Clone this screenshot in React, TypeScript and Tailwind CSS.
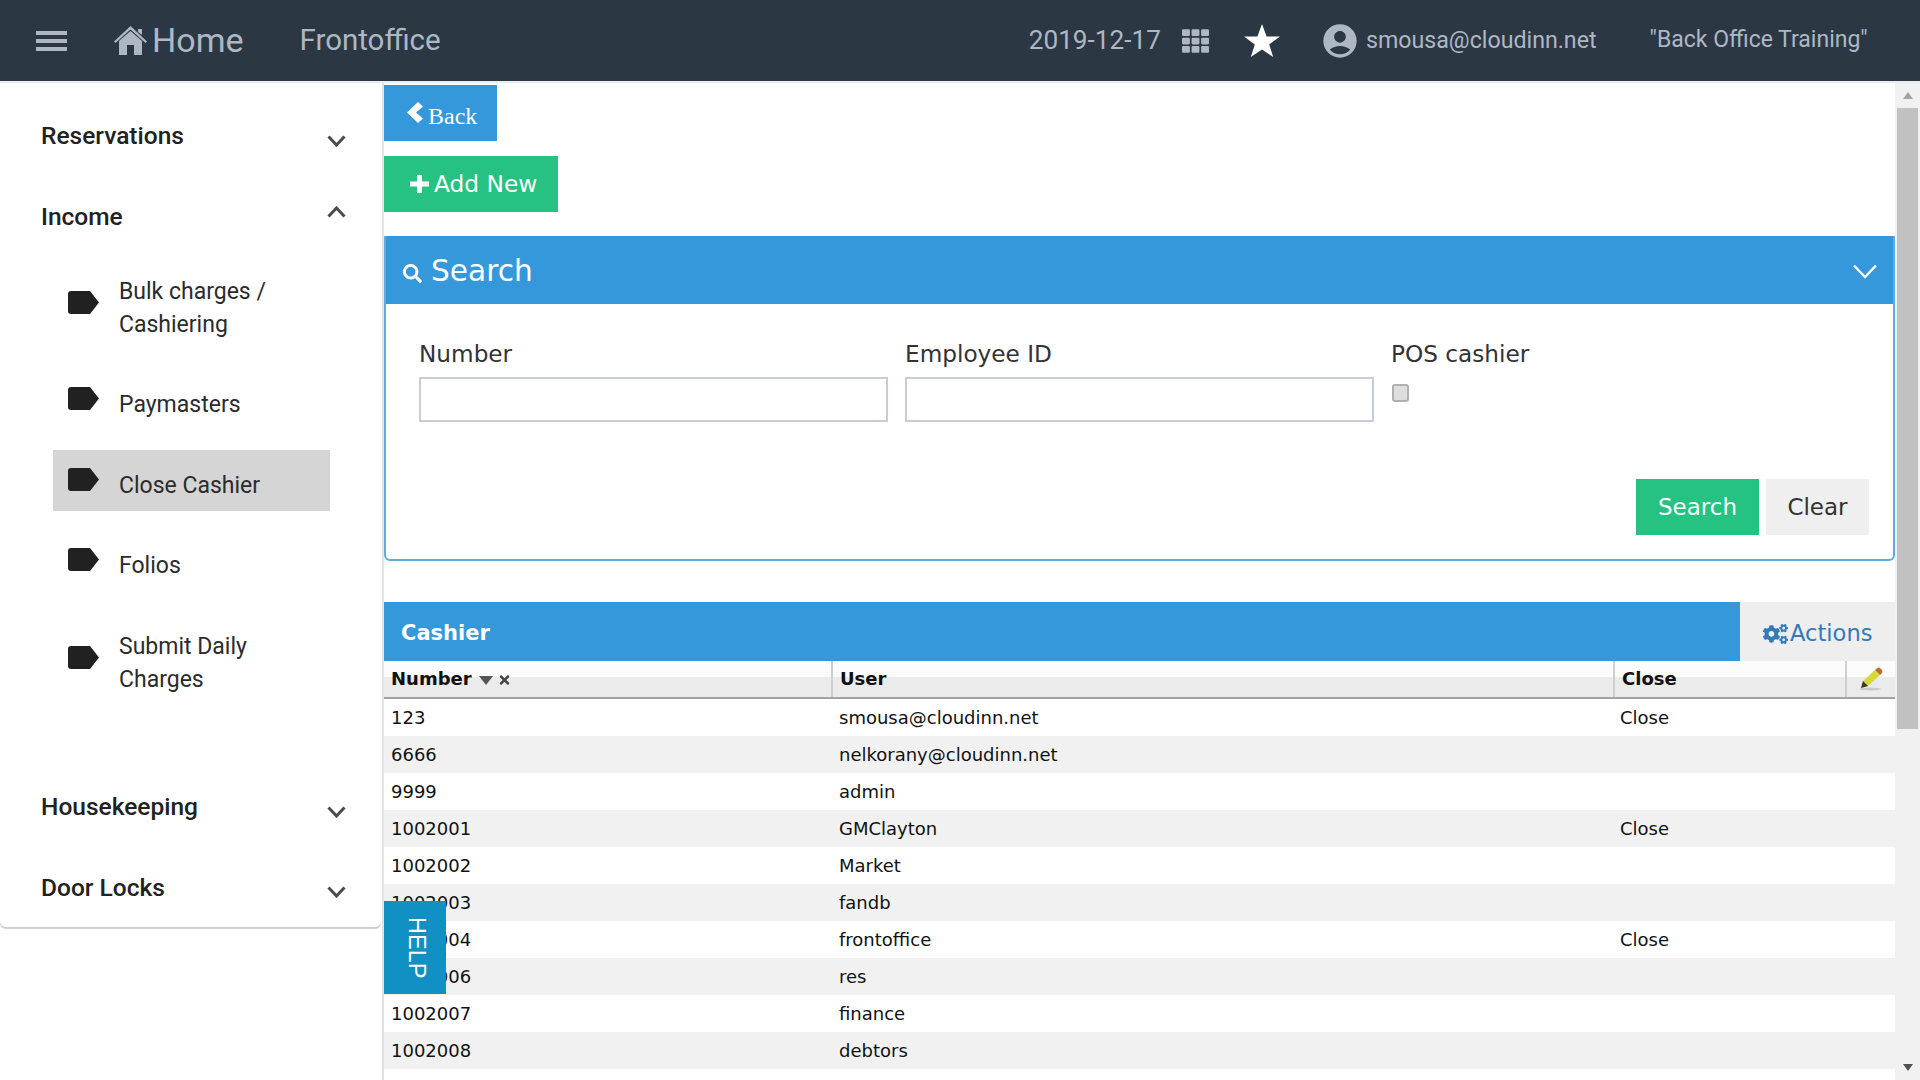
import React from 'react';
import { FaCogs, FaSearch, FaTh, FaTimes } from 'react-icons/fa';
import { MdAccountCircle } from 'react-icons/md';

const rows = [
  { number: '123', user: 'smousa@cloudinn.net', close: true },
  { number: '6666', user: 'nelkorany@cloudinn.net', close: false },
  { number: '9999', user: 'admin', close: false },
  { number: '1002001', user: 'GMClayton', close: true },
  { number: '1002002', user: 'Market', close: false },
  { number: '1002003', user: 'fandb', close: false },
  { number: '1002004', user: 'frontoffice', close: true },
  { number: '1002006', user: 'res', close: false },
  { number: '1002007', user: 'finance', close: false },
  { number: '1002008', user: 'debtors', close: false },
];

const Chevron = ({ up = false }: { up?: boolean }) => (
  <svg width="19" height="12" viewBox="0 0 19 12" className={up ? '-mt-[10px]' : 'mt-[10px]'}>
    <polyline
      points={up ? '1.5,10.5 9.5,2 17.5,10.5' : '1.5,1.5 9.5,10 17.5,1.5'}
      fill="none"
      stroke="#4a4a4a"
      strokeWidth="3"
    />
  </svg>
);

const SectionTitle = ({ title, open = false, last = false }: { title: string; open?: boolean; last?: boolean }) => (
  <div className={`flex items-center justify-between pl-[41px] pr-[35px] ${last ? 'h-[80px]' : 'h-[81px]'}`}>
    <span className="mt-[2px] text-[24.5px] font-medium text-[#212121]">{title}</span>
    <Chevron up={open} />
  </div>
);

const SubItem = ({ lines, active = false, extraTop = false }: { lines: string[]; active?: boolean; extraTop?: boolean }) => (
  <div
    className={`flex items-center gap-[20px] pl-[15px] ${active ? 'bg-[#d5d5d5] pb-[9px] pt-[19px]' : 'pb-[10px] pt-[18px]'} ${extraTop ? 'mt-[1px]' : ''}`}
  >
    <svg width="31" height="23" viewBox="0 0 31 23" className="-mt-[12px] shrink-0">
      <path d="M3 0H22L31 11.5L22 23H3Q0 23 0 20V3Q0 0 3 0Z" fill="#212121" />
    </svg>
    <div className="text-[23px] leading-[33px] text-[#2b2b2b]">
      {lines.map((line) => (
        <div key={line}>{line}</div>
      ))}
    </div>
  </div>
);

const Sidebar = () => (
  <aside className="h-full w-[384px] shrink-0 border-r-2 border-[#e2e2e2] font-['Roboto',sans-serif]">
    <div className="w-[381px] rounded-b-[6px] pt-[12px] shadow-[0_2px_1px_#cfcfcf]">
      <SectionTitle title="Reservations" />
      <SectionTitle title="Income" open />
      <div className="ml-[53px] flex w-[277px] flex-col gap-[19px] pb-[60px]">
        <SubItem lines={['Bulk charges /', 'Cashiering']} />
        <SubItem lines={['Paymasters']} />
        <SubItem lines={['Close Cashier']} active />
        <SubItem lines={['Folios']} extraTop />
        <SubItem lines={['Submit Daily', 'Charges']} extraTop />
      </div>
      <SectionTitle title="Housekeeping" />
      <SectionTitle title="Door Locks" last />
    </div>
  </aside>
);

const Header = () => (
  <header className="flex h-[83px] shrink-0 items-center border-b-2 border-[#ececec] bg-[#2c3744] pl-[36px] font-['Roboto',sans-serif] text-[#aeb7c4]">
    <div className="flex h-[20px] w-[31px] flex-col justify-between">
      <div className="h-[4px] bg-[#aeb7c4]" />
      <div className="h-[4px] bg-[#aeb7c4]" />
      <div className="h-[4px] bg-[#aeb7c4]" />
    </div>
    <svg width="33" height="29" viewBox="0 0 33 29" className="ml-[47px]" fill="#aeb7c4">
      <path d="M16.5 0L33 15.5L31.5 17L16.5 3.5L1.5 17L0 15.5Z" />
      <path d="M16.5 5L28 15V29H20V19H13V29H5V15Z" />
      <path d="M24 3H28V9L24 6Z" />
    </svg>
    <span className="ml-[5px] text-[34px]">Home</span>
    <span className="ml-[56px] text-[29.5px]">Frontoffice</span>
    <span className="ml-[588px] text-[26.2px]">2019-12-17</span>
    <FaTh className="ml-[21px] h-[30px] w-[27px]" />
    <svg width="36" height="33" viewBox="0 0 36 33" className="ml-[35px]">
      <polygon points="18,0 22.6,12.4 36,12.4 25.2,20.4 29.2,33 18,25.4 6.8,33 10.8,20.4 0,12.4 13.4,12.4" fill="#ffffff" />
    </svg>
    <MdAccountCircle className="ml-[40px] h-[40px] w-[40px]" />
    <span className="ml-[6px] text-[23.2px]">smousa@cloudinn.net</span>
    <span className="ml-[53px] text-[23px]">"Back Office Training"</span>
  </header>
);

const SearchPanel = () => (
  <section className="mt-[24px] h-[325px] rounded-b-[6px] border-x-2 border-b-2 border-[#5dade2]">
    <div className="flex h-[68px] items-center bg-[#3498db] px-[16px] text-white">
      <FaSearch className="ml-[1px] mt-[6px] h-[19px] w-[19px]" />
      <span className="ml-[9px] mt-[2px] text-[29.6px]">Search</span>
      <svg width="24" height="15" viewBox="0 0 24 15" className="ml-auto mt-[2px]">
        <polyline points="1,1.5 12,13 23,1.5" fill="none" stroke="#ffffff" strokeWidth="2.5" />
      </svg>
    </div>
    <div className="grid grid-cols-[486px_486px_486px] pl-[33px] pt-[33px] text-[23.2px] text-[#333333]">
      <div>
        <div className="leading-[34px]">Number</div>
        <input className="mt-[6px] h-[45px] w-[469px] border-2 border-[#c8ccd9] bg-white" />
      </div>
      <div>
        <div className="leading-[34px]">Employee ID</div>
        <input className="mt-[6px] h-[45px] w-[469px] border-2 border-[#c8ccd9] bg-white" />
      </div>
      <div>
        <div className="leading-[34px]">POS cashier</div>
        <div className="ml-[1px] mt-[13px] h-[18px] w-[17px] rounded-[3px] border-2 border-[#b0b0b0] bg-[#dedede]" />
      </div>
    </div>
    <div className="mt-[57px] flex justify-end gap-[7px] pr-[24px] text-[23px]">
      <button className="h-[56px] w-[123px] bg-[#26c281] text-white">Search</button>
      <button className="h-[56px] w-[103px] bg-[#efefef] text-[#333333]">Clear</button>
    </div>
  </section>
);

const HeaderCell = ({ className, children }: { className: string; children: React.ReactNode }) => (
  <div className={`flex items-center border-r-2 border-[#cfcfcf] pb-[2px] pl-[7px] font-bold ${className}`}>{children}</div>
);

const CashierTable = () => (
  <section className="mt-[41px] text-[18px] text-[#111111]">
    <div className="flex h-[59px]">
      <div className="flex flex-1 items-center bg-[#3498db] pl-[17px] pt-[4px] text-[21px] font-bold text-white">Cashier</div>
      <div className="flex w-[155px] items-center gap-[2px] bg-[#eeeeee] pl-[23px] pt-[4px] text-[22.6px] text-[#337ab7]">
        <FaCogs className="h-[24px] w-[25px]" />
        Actions
      </div>
    </div>
    <div className="flex h-[38px] border-b-2 border-[#a3a3a3] bg-[linear-gradient(#fcfcfc_0,#fcfcfc_45%,#ebebeb_45%,#ebebeb_100%)]">
      <HeaderCell className="w-[449px]">
        Number
        <svg width="14" height="9" viewBox="0 0 14 9" className="ml-[7px] mt-[4px]">
          <path d="M0 0H14L7 9Z" fill="#555555" />
        </svg>
        <FaTimes className="ml-[5px] mt-[4px] h-[14px] w-[13px] text-[#444444]" />
      </HeaderCell>
      <HeaderCell className="w-[782px]">User</HeaderCell>
      <HeaderCell className="w-[232px]">Close</HeaderCell>
      <div className="flex flex-1 items-center justify-center">
        <svg width="24" height="24" viewBox="0 0 24 24">
          <ellipse cx="11" cy="22" rx="11" ry="1.5" fill="#c9c9c9" />
          <path d="M2 21L4 14L16 3L21 8L9 19Z" fill="#d8d83a" />
          <path d="M16 3L18.5 1Q20 0 21.5 1.5L23 3Q24 4.5 23 6L21 8Z" fill="#b96f2c" />
          <path d="M2 21L4 14L9 19Z" fill="#3a3a2a" />
        </svg>
      </div>
    </div>
    {rows.map((row, i) => (
      <div key={row.number} className={`flex h-[37px] items-center ${i % 2 === 1 ? 'bg-[#f1f1f1]' : 'bg-white'}`}>
        <div className="w-[449px] pl-[7px]">{row.number}</div>
        <div className="w-[782px] pl-[6px]">{row.user}</div>
        <div className="pl-[5px]">{row.close ? 'Close' : ''}</div>
      </div>
    ))}
  </section>
);

const Scrollbar = () => (
  <div className="flex h-full w-[25px] shrink-0 flex-col items-center bg-[#f1f1f1]">
    <div className="mt-[9px] h-0 w-0 border-x-[5px] border-b-[7px] border-x-transparent border-b-[#a3a3a3]" />
    <div className="mt-[9px] h-[621px] w-[21px] bg-[#c1c1c1]" />
    <div className="mt-auto mb-[9px] h-0 w-0 border-x-[5px] border-t-[7px] border-x-transparent border-t-[#505050]" />
  </div>
);

const App = () => (
  <div className="flex h-screen w-screen flex-col overflow-hidden bg-white">
    <Header />
    <div className="flex min-h-0 flex-1">
      <Sidebar />
      <main className="relative min-w-0 flex-1 overflow-hidden pt-[2px] font-['DejaVu_Sans',sans-serif]">
        <button className="flex h-[56px] w-[113px] items-center bg-[#3498db] pl-[23px] font-['Liberation_Serif',serif] text-[24px] text-white">
          <svg width="16" height="21" viewBox="0 0 16 21" className="-mt-[1px] mr-[5px]">
            <polygon points="11,0 16,4.5 9,10.5 16,16.5 11,21 0,10.5" fill="#ffffff" />
          </svg>
          <span className="mt-[6px]">Back</span>
        </button>
        <button className="mt-[15px] flex h-[56px] w-[174px] items-center bg-[#26c281] pl-[26px] text-[23.3px] text-white">
          <svg width="19" height="18" viewBox="0 0 19 18" className="mr-[5px]">
            <path d="M7 0H12V6.5H19V11.5H12V18H7V11.5H0V6.5H7Z" fill="#ffffff" />
          </svg>
          Add New
        </button>
        <SearchPanel />
        <CashierTable />
        <div className="absolute left-0 top-[818px] flex h-[93px] w-[62px] items-center justify-center bg-[#1190c3] pl-[2px] font-['Liberation_Sans',sans-serif] text-[23.5px] text-white [writing-mode:vertical-rl]">
          HELP
        </div>
      </main>
      <Scrollbar />
    </div>
  </div>
);

export default App;
